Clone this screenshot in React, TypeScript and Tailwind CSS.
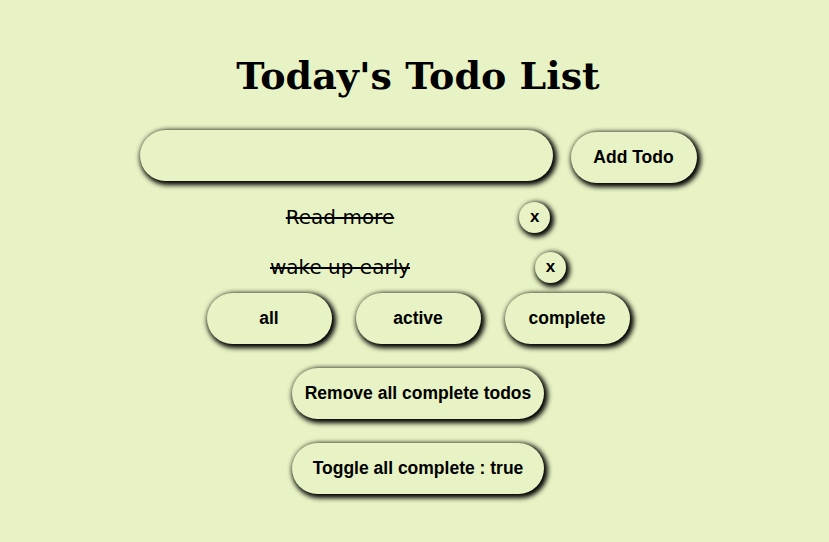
import React from "react";

const btn =
  "bg-[#e7f3c4] font-bold text-black font-['Liberation_Sans',Arial,sans-serif] shadow-[2px_2px_5px_2px_#000]";

export default function App() {
  return (
    <div className="min-h-[542px] w-full bg-[#e7f3c4] pl-[7px] flex flex-col items-center">
      <h1 className="mt-[52px] text-[38px] leading-[48px] font-bold text-black font-['DejaVu_Serif',Georgia,serif]">
        Today's Todo List
      </h1>
      <div className="mt-[30px] flex items-start gap-[18px]">
        <input className="w-[413px] h-[51px] rounded-[26px] bg-[#e7f3c4] outline-none shadow-[2px_2px_5px_2px_#000]" />
        <button className={`mt-[2px] w-[126px] h-[51px] rounded-[26px] text-[17.5px] ${btn}`}>
          Add Todo
        </button>
      </div>
      <ul className="mt-[9px] flex flex-col items-center">
        {["Read more", "wake up early"].map((t) => (
          <li key={t} className="h-[50px] flex items-center gap-[125px]">
            <span className="text-[20px] line-through text-black font-['DejaVu_Sans',Verdana,sans-serif]">
              {t}
            </span>
            <button className={`w-[31px] h-[31px] rounded-full text-[17px] ${btn}`}>x</button>
          </li>
        ))}
      </ul>
      <div className="mt-[1px] flex gap-[24px]">
        {["all", "active", "complete"].map((t) => (
          <button key={t} className={`w-[125px] h-[51px] rounded-[26px] text-[17.5px] ${btn}`}>
            {t}
          </button>
        ))}
      </div>
      <button className={`mt-[24px] w-[252px] h-[51px] rounded-[26px] text-[17.5px] ${btn}`}>
        Remove all complete todos
      </button>
      <button className={`mt-[24px] w-[252px] h-[51px] rounded-[26px] text-[17.5px] ${btn}`}>
        Toggle all complete : true
      </button>
    </div>
  );
}
